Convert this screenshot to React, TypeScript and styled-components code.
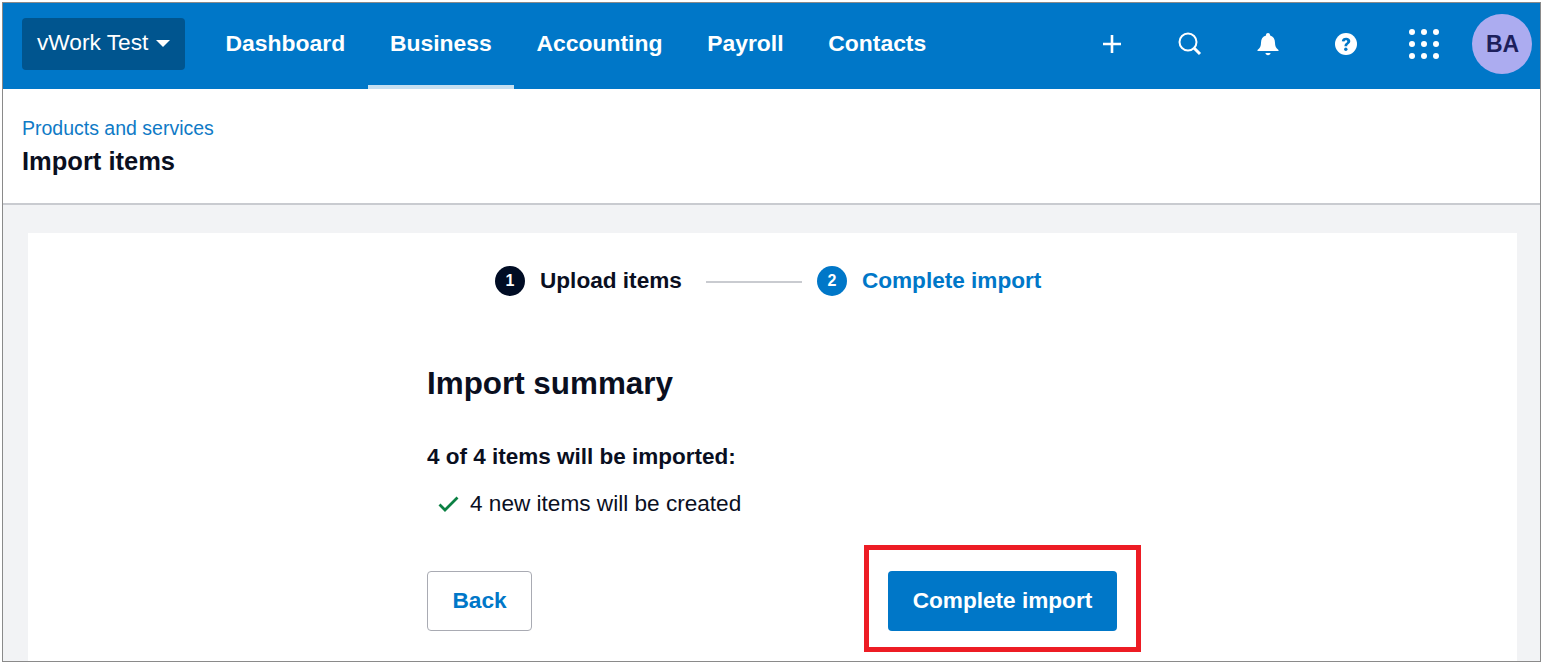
import React from "react";
import styled, { createGlobalStyle } from "styled-components";

const GlobalStyle = createGlobalStyle`
  html, body {
    margin: 0;
    padding: 0;
    background: #fff;
    font-family: "Liberation Sans", Arial, sans-serif;
  }
`;

const Frame = styled.div`
  box-sizing: border-box;
  width: 1539px;
  height: 660px;
  margin: 2px 0 0 2px;
  border: 1px solid #8a8a8a;
  display: flex;
  flex-direction: column;
  overflow: hidden;
  background: #fff;
`;

const TopBar = styled.header`
  height: 86px;
  flex: none;
  background: #0077c8;
  display: flex;
  align-items: stretch;
  padding: 0 8px 0 19px;
`;

const BusinessButton = styled.button`
  align-self: flex-start;
  box-sizing: border-box;
  margin-top: 15px;
  width: 163px;
  height: 52px;
  padding: 0 0 4px 15px;
  border: 0;
  border-radius: 4px;
  background: #00558f;
  color: #fff;
  font: 400 22.7px "Liberation Sans", Arial, sans-serif;
  display: flex;
  align-items: center;
  gap: 8px;
`;

const Caret = styled.span`
  width: 0;
  height: 0;
  border-left: 7px solid transparent;
  border-right: 7px solid transparent;
  border-top: 7px solid #fff;
  margin-top: 3px;
`;

const Nav = styled.nav`
  display: flex;
  margin-left: 18.2px;
`;

const NavItem = styled.a<{ $active?: boolean }>`
  box-sizing: border-box;
  display: flex;
  align-items: center;
  padding: 4px 22.4px 6px;
  height: 86px;
  color: #fff;
  font-size: 22.9px;
  font-weight: 700;
  border-bottom: 4px solid ${(p) => (p.$active ? "#c4dff1" : "transparent")};
`;

const Actions = styled.div`
  margin-left: auto;
  padding-bottom: 4px;
  display: flex;
  align-items: center;
`;

const ActionIcon = styled.span`
  width: 78px;
  height: 40px;
  display: flex;
  align-items: center;
  justify-content: center;
  svg {
    display: block;
  }
`;

const Avatar = styled.span`
  width: 60px;
  height: 60px;
  margin-left: 9px;
  padding-left: 1px;
  box-sizing: border-box;
  border-radius: 50%;
  background: #acacf0;
  color: #1d1f5c;
  font-size: 23px;
  font-weight: 700;
  display: flex;
  align-items: center;
  justify-content: center;
`;

const TitleBar = styled.div`
  height: 116px;
  flex: none;
  box-sizing: border-box;
  padding: 27px 0 0 19px;
  border-bottom: 2px solid #c9cbd0;
`;

const Breadcrumb = styled.a`
  display: block;
  color: #0f7ac6;
  font-size: 19.5px;
  line-height: 24px;
`;

const PageTitle = styled.h1`
  margin: 6px 0 0;
  color: #0a0f1f;
  font-size: 25.5px;
  line-height: 30px;
  font-weight: 700;
`;

const Body = styled.main`
  flex: 1;
  min-height: 0;
  background: #f2f3f5;
  padding: 28px 23px 0 25px;
`;

const Card = styled.section`
  height: 100%;
  background: #fff;
`;

const Stepper = styled.ol`
  list-style: none;
  margin: 0;
  padding: 33px 0 0 467px;
  display: flex;
  align-items: center;
  height: 30px;
`;

const StepDot = styled.span<{ $current?: boolean }>`
  width: 30px;
  height: 30px;
  border-radius: 50%;
  background: ${(p) => (p.$current ? "#0077c8" : "#000c24")};
  color: #fff;
  font-size: 16px;
  font-weight: 700;
  display: flex;
  align-items: center;
  justify-content: center;
`;

const Step = styled.li`
  display: flex;
  align-items: center;
  gap: 15px;
`;

const StepLabel = styled.span<{ $current?: boolean }>`
  color: ${(p) => (p.$current ? "#0077c8" : "#0a0f1f")};
  font-size: 22.6px;
  font-weight: 700;
`;

const StepLine = styled.li`
  width: 96px;
  height: 2px;
  margin: 2px 15px 0 24px;
  background: #c9cbd0;
`;

const Summary = styled.div`
  width: 690px;
  margin-left: 399px;
  padding-top: 68px;
`;

const SummaryTitle = styled.h2`
  margin: 0;
  color: #0a0f1f;
  font-size: 31.4px;
  line-height: 40px;
  font-weight: 700;
`;

const CountLine = styled.p`
  margin: 39px 0 0;
  color: #0a0f1f;
  font-size: 22.5px;
  line-height: 28px;
  font-weight: 700;
`;

const ResultLine = styled.div`
  margin-top: 19px;
  display: flex;
  align-items: center;
  gap: 11px;
  padding-left: 11px;
  color: #0a0f1f;
  font-size: 22.6px;
  line-height: 28px;
`;

const ButtonRow = styled.div`
  margin-top: 53px;
  display: flex;
  justify-content: space-between;
`;

const BackButton = styled.button`
  box-sizing: border-box;
  width: 105px;
  height: 60px;
  padding: 0 0 2px;
  border: 1px solid #a9abb3;
  border-radius: 4px;
  background: #fff;
  color: #0077c8;
  font: 700 22.7px "Liberation Sans", Arial, sans-serif;
`;

const Highlight = styled.div`
  position: relative;
`;

const PrimaryButton = styled.button`
  display: block;
  width: 229px;
  height: 60px;
  border: 0;
  border-radius: 4px;
  background: #0077c8;
  color: #fff;
  font: 700 22.6px "Liberation Sans", Arial, sans-serif;
`;

const RedBox = styled.span`
  position: absolute;
  left: -24px;
  top: -26px;
  width: 277px;
  height: 107px;
  box-sizing: border-box;
  border: 5px solid #ed1c24;
`;

const Dots = () => (
  <svg width="32" height="32" viewBox="0 0 32 32" fill="#fff">
    {[4, 16, 28].flatMap((y) =>
      [4, 16, 28].map((x) => <circle key={`${x}-${y}`} cx={x} cy={y} r="3" />)
    )}
  </svg>
);

export default function App() {
  return (
    <>
      <GlobalStyle />
      <Frame>
        <TopBar>
          <BusinessButton>
            vWork Test
            <Caret />
          </BusinessButton>
          <Nav>
            <NavItem>Dashboard</NavItem>
            <NavItem $active>Business</NavItem>
            <NavItem>Accounting</NavItem>
            <NavItem>Payroll</NavItem>
            <NavItem>Contacts</NavItem>
          </Nav>
          <Actions>
            <ActionIcon>
              <svg width="20" height="20" viewBox="0 0 20 20">
                <path d="M10 1v18M1 10h18" stroke="#fff" strokeWidth="2.6" />
              </svg>
            </ActionIcon>
            <ActionIcon>
              <svg width="24" height="24" viewBox="0 0 24 24" fill="none" stroke="#fff">
                <circle cx="10" cy="10" r="8.500" strokeWidth="2" />
                <path d="M16 16l6 6" strokeWidth="3" />
              </svg>
            </ActionIcon>
            <ActionIcon>
              <svg width="22" height="24" viewBox="0 0 22 24" fill="#fff">
                <path d="M11 1c1.200 0 2 .8 2 2v.6c3.400.9 5 3.600 5 7.200 0 3.600 1 5.200 3.500 7.200v1H.5v-1C3 16 4 14.400 4 10.800c0-3.600 1.600-6.300 5-7.200V3c0-1.200.8-2 2-2z" />
                <path d="M8.500 21h5c0 1.300-1.100 2.200-2.500 2.200S8.500 22.300 8.500 21z" />
              </svg>
            </ActionIcon>
            <ActionIcon>
              <svg width="22" height="22" viewBox="0 0 22 22">
                <circle cx="11" cy="11" r="11" fill="#fff" />
                <path d="M6.800 8.300c.2-2.500 1.900-3.600 4.300-3.600 2.500 0 4.200 1.400 4.200 3.400 0 1.700-1 2.400-2 3.100-.8.600-1.100 1-1.100 2H9.500c0-1.700.6-2.500 1.600-3.200.8-.6 1.200-1 1.200-1.600 0-.8-.5-1.200-1.300-1.200-.9 0-1.400.6-1.500 1.400z" fill="#0077c8" />
                <circle cx="10.800" cy="16.200" r="1.700" fill="#0077c8" />
              </svg>
            </ActionIcon>
            <ActionIcon>
              <Dots />
            </ActionIcon>
            <Avatar>BA</Avatar>
          </Actions>
        </TopBar>
        <TitleBar>
          <Breadcrumb>Products and services</Breadcrumb>
          <PageTitle>Import items</PageTitle>
        </TitleBar>
        <Body>
          <Card>
            <Stepper>
              <Step>
                <StepDot>1</StepDot>
                <StepLabel>Upload items</StepLabel>
              </Step>
              <StepLine />
              <Step>
                <StepDot $current>2</StepDot>
                <StepLabel $current>Complete import</StepLabel>
              </Step>
            </Stepper>
            <Summary>
              <SummaryTitle>Import summary</SummaryTitle>
              <CountLine>4 of 4 items will be imported:</CountLine>
              <ResultLine>
                <svg width="21" height="16" viewBox="0 0 21 16" fill="none">
                  <path d="M1.500 8.500l5.500 5.500L19.500 1.500" stroke="#0b8043" strokeWidth="2.800" />
                </svg>
                4 new items will be created
              </ResultLine>
              <ButtonRow>
                <BackButton>Back</BackButton>
                <Highlight>
                  <PrimaryButton>Complete import</PrimaryButton>
                  <RedBox />
                </Highlight>
              </ButtonRow>
            </Summary>
          </Card>
        </Body>
      </Frame>
    </>
  );
}
